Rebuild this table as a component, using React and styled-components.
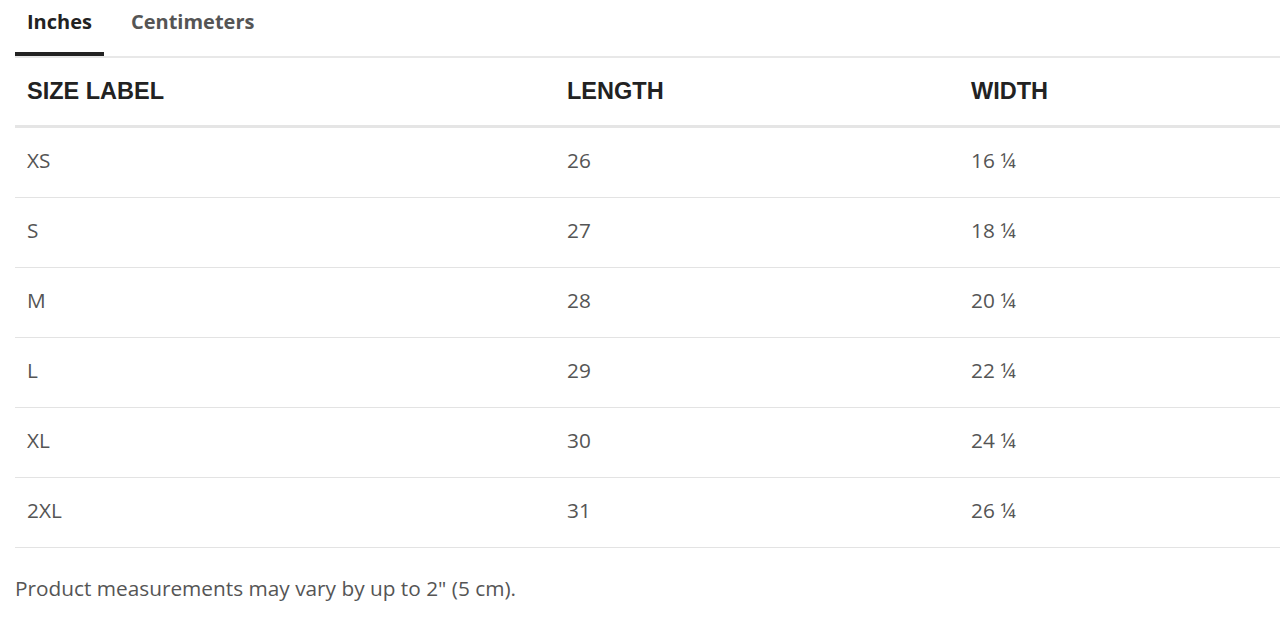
import React from 'react';
import styled, { createGlobalStyle } from 'styled-components';

const GlobalStyle = createGlobalStyle`
    body {
        margin: 0;
        background: #fff;
        font-family: "Open Sans", Lato, sans-serif;
    }
`;

const Page = styled.div`
    padding: 0 0 0 15px;
`;

const Tabs = styled.div`
    display: flex;
    align-items: flex-start;
    gap: 15px;
    border-bottom: 2px solid #e8e8e8;
`;

const Tab = styled.div`
    padding: 8px 12px 16px;
    font-family: "Open Sans", sans-serif;
    font-weight: 700;
    font-size: 20px;
    line-height: 28px;
    color: ${p => (p.active ? '#222' : '#555')};
    border-bottom: 4px solid ${p => (p.active ? '#222' : 'transparent')};
    cursor: pointer;
`;

const Row = styled.div`
    display: grid;
    grid-template-columns: 540px 404px 1fr;
    height: 70px;
    align-items: center;
    border-bottom: ${p => (p.head ? '3px solid #e5e5e5' : '1px solid #e3e3e3')};
    box-sizing: border-box;
`;

const Cell = styled.div`
    padding-left: 12px;
    font-family: ${p => (p.head ? '"Liberation Sans", Arial, sans-serif' : '"Open Sans", sans-serif')};
    font-weight: ${p => (p.head ? 700 : 400)};
    font-size: ${p => (p.head ? '23.5px' : '20.8px')};
    color: ${p => (p.head ? '#222' : '#555')};
    padding-bottom: ${p => (p.head ? '0' : '5px')};
`;

const Note = styled.p`
    margin: 26px 0 0;
    font-size: 20.8px;
    color: #555;
`;

const rows = [
    ['XS', '26', '16 ¼'],
    ['S', '27', '18 ¼'],
    ['M', '28', '20 ¼'],
    ['L', '29', '22 ¼'],
    ['XL', '30', '24 ¼'],
    ['2XL', '31', '26 ¼'],
];

const App = () => {
    return (
        <Page>
            <GlobalStyle />
            <Tabs>
                <Tab active>Inches</Tab>
                <Tab>Centimeters</Tab>
            </Tabs>
            <Row head>
                <Cell head>SIZE LABEL</Cell>
                <Cell head>LENGTH</Cell>
                <Cell head>WIDTH</Cell>
            </Row>
            {rows.map(r => (
                <Row key={r[0]}>
                    {r.map((c, i) => (
                        <Cell key={i}>{c}</Cell>
                    ))}
                </Row>
            ))}
            <Note>Product measurements may vary by up to 2" (5 cm).</Note>
        </Page>
    );
};

export default App;
